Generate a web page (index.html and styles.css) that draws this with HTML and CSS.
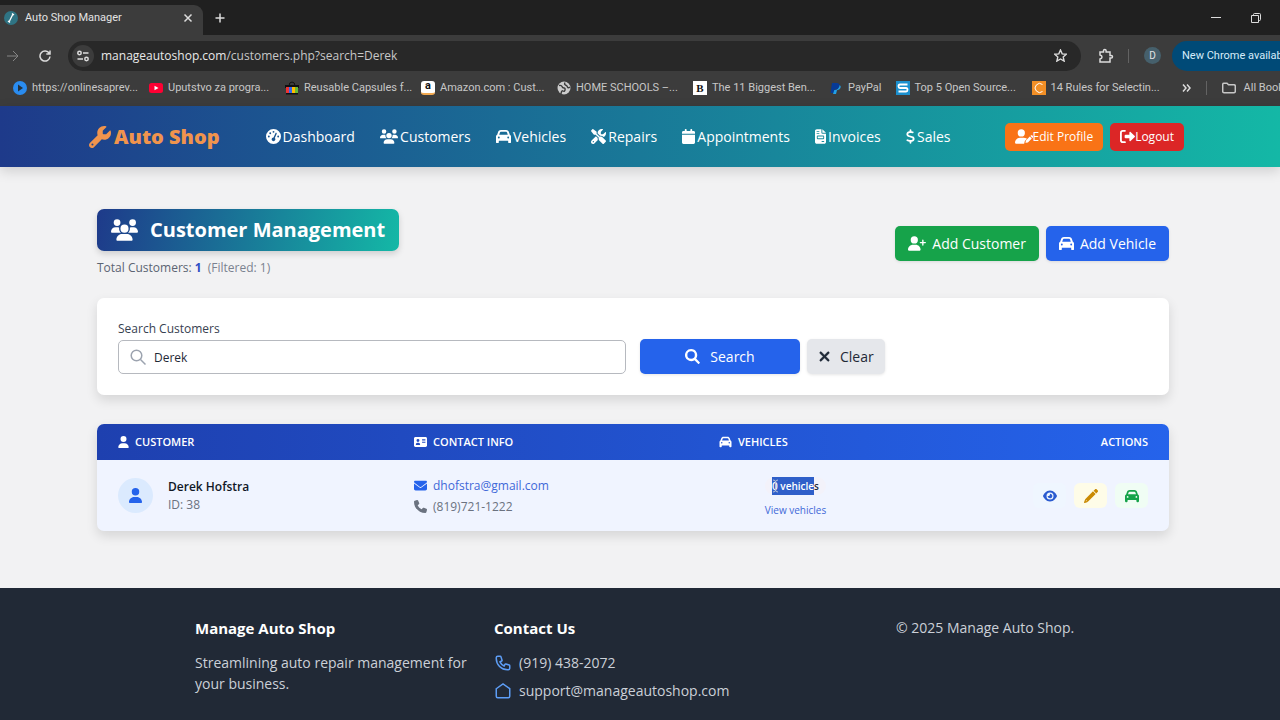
FILE: index.html
```html
<!DOCTYPE html>
<html lang="en">
<head>
    <meta charset="UTF-8">
    <meta name="viewport" content="width=device-width, initial-scale=1.0">
    <title>Auto Shop Manager</title>
    <link rel="stylesheet" href="styles.css">
</head>
<body>

<!-- Shared icons -->
<svg class="sprite" aria-hidden="true">
    <symbol id="i-user" viewBox="0 0 448 512"><path d="M224 256A128 128 0 1 0 224 0a128 128 0 1 0 0 256zm-45.7 48C79.8 304 0 383.8 0 482.3C0 498.7 13.3 512 29.7 512H418.3c16.4 0 29.7-13.3 29.7-29.7C448 383.8 368.2 304 269.7 304H178.3z"/></symbol>
    <symbol id="i-user-plus" viewBox="0 0 640 512"><path d="M96 128a128 128 0 1 1 256 0A128 128 0 1 1 96 128zM0 482.3C0 383.8 79.8 304 178.3 304h91.4C368.2 304 448 383.8 448 482.3c0 16.4-13.3 29.7-29.7 29.7H29.7C13.3 512 0 498.7 0 482.3zM504 312V248H440c-13.3 0-24-10.7-24-24s10.7-24 24-24h64V136c0-13.3 10.7-24 24-24s24 10.7 24 24v64h64c13.3 0 24 10.7 24 24s-10.7 24-24 24H552v64c0 13.3-10.7 24-24 24s-24-10.7-24-24z"/></symbol>
    <symbol id="i-user-pen" viewBox="0 0 640 512"><path d="M224 256A128 128 0 1 0 224 0a128 128 0 1 0 0 256zm-45.7 48C79.8 304 0 383.8 0 482.3C0 498.7 13.3 512 29.7 512H325l24-100 75-77C390 315 330 304 269.7 304H178.3zM549 236l71 71 13-13c16-16 16-41 0-57l-14-14c-16-16-41-16-57 0zM526 259L397 388c-4 4-7 9-8 15l-15 60c-1 5 0 11 4 15s10 6 15 4l60-15c6-1 11-4 15-8l129-129z"/></symbol>
    <symbol id="i-users" viewBox="0 0 640 512"><path d="M144 0a80 80 0 1 1 0 160A80 80 0 1 1 144 0zM512 0a80 80 0 1 1 0 160A80 80 0 1 1 512 0zM0 298.7C0 239.8 47.8 192 106.7 192h42.7c15.9 0 31 3.5 44.6 9.7c-1.3 7.2-1.9 14.7-1.9 22.3c0 38.2 16.8 72.5 43.3 96c-.2 0-.4 0-.7 0H21.3C9.6 320 0 310.4 0 298.7zM405.3 320c-.2 0-.4 0-.7 0c26.6-23.5 43.3-57.8 43.3-96c0-7.6-.7-15-1.9-22.3c13.6-6.3 28.7-9.7 44.6-9.7h42.7C592.2 192 640 239.8 640 298.7c0 11.8-9.6 21.3-21.3 21.3H405.3zM224 224a96 96 0 1 1 192 0 96 96 0 1 1 -192 0zM128 485.3C128 411.7 187.7 352 261.3 352H378.7C452.3 352 512 411.7 512 485.3c0 14.7-11.9 26.7-26.7 26.7H154.7c-14.7 0-26.7-11.9-26.7-26.7z"/></symbol>
    <symbol id="i-car" viewBox="0 0 512 512"><path d="M135.2 117.4L109.1 192H402.9l-26.1-74.6C372.3 104.6 360.2 96 346.6 96H165.4c-13.6 0-25.7 8.6-30.2 21.4zM39.6 196.8L74.8 96.3C88.3 57.8 124.6 32 165.4 32H346.6c40.8 0 77.1 25.8 90.6 64.3l35.2 100.5c23.2 9.6 39.6 32.5 39.6 59.2V400v48c0 17.7-14.3 32-32 32H448c-17.7 0-32-14.3-32-32V400H96v48c0 17.7-14.3 32-32 32H32c-17.7 0-32-14.3-32-32V400 256c0-26.7 16.4-49.6 39.6-59.2zM128 288a32 32 0 1 0 -64 0 32 32 0 1 0 64 0zm288 32a32 32 0 1 0 0-64 32 32 0 1 0 0 64z"/></symbol>
    <symbol id="i-wrench" viewBox="0 0 512 512"><path d="M352 320c88.4 0 160-71.6 160-160c0-15.3-2.2-30.1-6.2-44.2c-3.1-10.8-16.4-13.2-24.3-5.3l-76.8 76.8c-3 3-7.1 4.700-11.3 4.700H336c-8.8 0-16-7.200-16-16V118.600c0-4.200 1.700-8.300 4.700-11.300l76.800-76.800c7.900-7.900 5.400-21.200-5.300-24.300C382.100 2.200 367.300 0 352 0C263.600 0 192 71.600 192 160c0 19.100 3.400 37.500 9.500 54.500L19.900 396.100C7.200 408.800 0 426.100 0 444.100C0 481.600 30.400 512 67.900 512c18 0 35.300-7.200 48-19.900L297.500 310.500c17 6.200 35.400 9.500 54.500 9.500zM80 408a24 24 0 1 1 0 48 24 24 0 1 1 0-48z"/></symbol>
    <symbol id="i-gauge" viewBox="0 0 512 512"><path d="M0 256a256 256 0 1 1 512 0A256 256 0 1 1 0 256zM288 96a32 32 0 1 0 -64 0 32 32 0 1 0 64 0zM256 416c35.300 0 64-28.700 64-64c0-17.400-6.900-33.100-18.100-44.600L366 161.700c5.300-12.100-.2-26.300-12.300-31.600s-26.300 .2-31.600 12.300L257.900 288c-.6 0-1.300 0-1.900 0c-35.300 0-64 28.700-64 64s28.700 64 64 64zM176 144a32 32 0 1 0 -64 0 32 32 0 1 0 64 0zM96 288a32 32 0 1 0 0-64 32 32 0 1 0 0 64zm352-32a32 32 0 1 0 -64 0 32 32 0 1 0 64 0z"/></symbol>
    <symbol id="i-tools" viewBox="0 0 512 512"><path d="M78.600 5C69.100-2.400 55.600-1.500 47 7L7 47c-8.500 8.500-9.400 22-2.100 31.600l80 104c4.500 5.900 11.600 9.400 19 9.400h54.100l109 109c-14.700 29-10 65.400 14.300 89.600l112 112c12.500 12.500 32.800 12.500 45.300 0l64-64c12.500-12.500 12.500-32.800 0-45.300l-112-112c-24.200-24.200-60.600-29-89.600-14.300l-109-109V104c0-7.500-3.500-14.500-9.400-19L78.600 5zM19.900 396.100C7.200 408.800 0 426.100 0 444.100C0 481.600 30.400 512 67.900 512c18 0 35.300-7.200 48-19.900L233.700 374.300c-7.800-20.900-9-43.600-3.600-65.100l-61.700-61.700L19.900 396.100zM512 144c0-10.500-1.100-20.700-3.200-30.500c-2.400-11.200-16.100-14.100-24.200-6l-63.900 63.900c-3 3-7.100 4.700-11.300 4.700H352c-8.800 0-16-7.200-16-16V102.600c0-4.200 1.700-8.300 4.700-11.300l63.900-63.900c8.100-8.100 5.200-21.800-6-24.200C388.700 1.100 378.500 0 368 0C288.500 0 224 64.500 224 144l0 .8 85.300 85.300c36-9.100 75.800 .5 104 28.700L429 274.500c49-23 83-72.800 83-130.500zM56 432a24 24 0 1 1 48 0 24 24 0 1 1 -48 0z"/></symbol>
    <symbol id="i-calendar" viewBox="0 0 448 512"><path d="M96 32V64H48C21.500 64 0 85.500 0 112v48H448V112c0-26.500-21.500-48-48-48H352V32c0-17.700-14.300-32-32-32s-32 14.300-32 32V64H160V32c0-17.700-14.300-32-32-32S96 14.300 96 32zM448 192H0V464c0 26.500 21.500 48 48 48H400c26.500 0 48-21.500 48-48V192z"/></symbol>
    <symbol id="i-invoice" viewBox="0 0 384 512"><path fill-rule="evenodd" d="M64 0C28.700 0 0 28.700 0 64V448c0 35.300 28.700 64 64 64H320c35.300 0 64-28.700 64-64V160H256c-17.700 0-32-14.300-32-32V0zM256 0V128H384zM64 72h80a8 8 0 0 1 0 24H64a8 8 0 0 1 0-24zM64 136h80a8 8 0 0 1 0 24H64a8 8 0 0 1 0-24zM96 224H288a32 32 0 0 1 32 32v64a32 32 0 0 1-32 32H96a32 32 0 0 1-32-32V256a32 32 0 0 1 32-32zM96 256V320H288V256zM240 416h72a8 8 0 0 1 0 28H240a8 8 0 0 1 0-28z"/></symbol>
    <symbol id="i-dollar" viewBox="0 0 320 512"><path d="M160 0c17.700 0 32 14.300 32 32V67.700c1.600 .2 3.100 .4 4.700 .7c.4 .1 .7 .1 1.100 .2l48 8.800c17.400 3.200 28.900 19.900 25.700 37.200s-19.900 28.900-37.200 25.700l-47.500-8.700c-31.300-4.600-58.900-1.500-78.300 6.200s-27.200 18.300-29 28.100c-2 10.700-.5 16.700 1.200 20.400c1.800 3.900 5.500 8.300 12.800 13.200c16.300 10.700 41.300 17.700 73.700 26.300l2.900 .8c28.600 7.600 63.600 16.800 89.600 33.800c14.200 9.300 27.600 21.900 35.900 39.500c8.500 17.900 10.300 37.900 6.400 59.200c-6.900 38-33.100 63.400-65.600 76.700c-13.700 5.600-28.600 9.200-44.400 11V480c0 17.700-14.300 32-32 32s-32-14.300-32-32V445.100c-.4-.1-.9-.1-1.300-.2l-.2 0 0 0c-24.400-3.800-64.500-14.300-91.500-26.300c-16.100-7.200-23.400-26.100-16.200-42.200s26.100-23.400 42.200-16.200c20.900 9.300 55.300 18.500 75.200 21.600c31.900 4.700 58.200 2 76-5.300c16.900-6.900 24.600-16.900 26.800-28.900c1.900-10.600 .4-16.700-1.300-20.400c-1.900-4-5.600-8.400-13-13.300c-16.400-10.700-41.500-17.700-74-26.300l-2.800-.7 0 0C119.400 279.300 84.400 270 58.400 253c-14.200-9.300-27.500-22-35.800-39.600c-8.400-17.900-10.100-37.900-6.100-59.200C23.700 116 52.300 91.200 84.800 78.300c13.300-5.300 27.900-8.900 43.200-11V32c0-17.700 14.300-32 32-32z"/></symbol>
    <symbol id="i-logout" viewBox="0 0 512 512"><path d="M96 32h74a30 30 0 0 1 0 60H96a34 34 0 0 0-34 34V386a34 34 0 0 0 34 34h74a30 30 0 0 1 0 60H96a96 96 0 0 1-96-96V128a96 96 0 0 1 96-96zM504.500 273.400L361 409c-18 17-41 5-41-17V312H190a32 32 0 0 1-32-32V232a32 32 0 0 1 32-32H320V120c0-22 23-34 41-17L504.500 238.600c10 10 10 25 0 34.800z"/></symbol>
    <symbol id="i-search" viewBox="0 0 512 512"><path fill-rule="evenodd" d="M208 0a208 208 0 0 1 171 326l122 122a24 24 0 0 1 0 34l-20 20a24 24 0 0 1-34 0L325 380A208 208 0 1 1 208 0zM208 80a128 128 0 1 0 0 256 128 128 0 1 0 0-256z"/></symbol>
    <symbol id="i-xmark" viewBox="0 0 384 512"><path d="M342.600 150.600c12.500-12.500 12.500-32.800 0-45.300s-32.800-12.500-45.300 0L192 210.700 86.600 105.400c-12.500-12.500-32.800-12.500-45.300 0s-12.500 32.800 0 45.300L146.700 256 41.400 361.400c-12.500 12.500-12.500 32.800 0 45.300s32.800 12.500 45.300 0L192 301.300 297.400 406.600c12.500 12.500 32.800 12.500 45.300 0s12.500-32.800 0-45.300L237.300 256 342.600 150.600z" stroke="currentColor" stroke-width="20"/></symbol>
    <symbol id="i-card" viewBox="0 0 576 512"><path fill-rule="evenodd" d="M64 32C28.700 32 0 60.700 0 96V416c0 35.300 28.700 64 64 64H512c35.300 0 64-28.700 64-64V96c0-35.300-28.700-64-64-64zM176 128a64 64 0 1 1 0 128 64 64 0 1 1 0-128zM80 368c0-44.200 35.800-80 80-80h32c44.200 0 80 35.800 80 80 0 8.800-7.200 16-16 16H96c-8.800 0-16-7.200-16-16zM368 128H496a16 16 0 0 1 0 32H368a16 16 0 0 1 0-32zM368 192H496a16 16 0 0 1 0 32H368a16 16 0 0 1 0-32zM368 256H496a16 16 0 0 1 0 32H368a16 16 0 0 1 0-32z"/></symbol>
    <symbol id="i-envelope" viewBox="0 0 512 512"><path d="M48 64C21.500 64 0 85.500 0 112c0 15.100 7.100 29.300 19.200 38.400L236.800 313.600c11.400 8.500 27 8.500 38.400 0L492.800 150.400c12.100-9.100 19.200-23.300 19.200-38.400c0-26.500-21.500-48-48-48H48zM0 176V384c0 35.300 28.700 64 64 64H448c35.300 0 64-28.700 64-64V176L294.400 339.200c-22.800 17.100-54 17.100-76.800 0L0 176z"/></symbol>
    <symbol id="i-phone" viewBox="0 0 512 512"><path d="M164.900 24.600c-7.700-18.600-28-28.500-47.400-23.200l-88 24C12.100 30.200 0 46 0 64C0 311.400 200.600 512 448 512c18 0 33.800-12.100 38.600-29.500l24-88c5.300-19.400-4.600-39.700-23.200-47.400l-96-40c-16.300-6.800-35.200-2.100-46.300 11.600L304.700 368C234.300 334.700 177.300 277.700 144 207.300L193.300 167c13.700-11.200 18.400-30 11.600-46.300l-40-96z"/></symbol>
    <symbol id="i-eye" viewBox="0 0 576 512"><path d="M288 32c-80.800 0-145.500 36.800-192.600 80.600C48.600 156 17.300 208 2.500 243.700c-3.300 7.900-3.300 16.700 0 24.600C17.300 304 48.600 356 95.400 399.400C142.500 443.200 207.200 480 288 480s145.500-36.800 192.600-80.600c46.800-43.500 78.100-95.400 93-131.100c3.300-7.900 3.300-16.700 0-24.600c-14.900-35.700-46.200-87.700-93-131.100C433.500 68.800 368.800 32 288 32zM144 256a144 144 0 1 1 288 0 144 144 0 1 1 -288 0zm144-64c0 35.300-28.700 64-64 64c-7.100 0-13.900-1.200-20.300-3.300c-5.500-1.800-11.900 1.600-11.700 7.400c.3 6.900 1.300 13.800 3.200 20.700c13.700 51.200 66.400 81.600 117.600 67.900s81.600-66.400 67.900-117.600c-11.100-41.500-47.800-69.400-88.600-71.100c-5.800-.2-9.200 6.100-7.400 11.700c2.100 6.400 3.300 13.200 3.300 20.300z"/></symbol>
    <symbol id="i-pencil" viewBox="0 0 512 512"><path fill-rule="evenodd" d="M400 14L350 64 448 162 498 112C517 93 517 63 498 44L468 14C449-5 419-5 400 14zM328 86L52 362C42 372 35 384 31 398L1 482C-5 502 10 517 30 511L114 481C128 477 140 470 150 460L426 184zM74 405l33 33-42 13z"/></symbol>
</svg>

<!-- Browser window -->
<header class="chrome">
    <div class="tabstrip">
        <div class="tab">
            <svg class="tab-icon" viewBox="0 0 14 14"><circle cx="7" cy="7" r="7" fill="#2f7484"/><path d="M5 11l4-8M4 10l2 1.500M8 2.500l2 1.500" stroke="#fff" stroke-width="1.300"/></svg>
            <span class="tab-title">Auto Shop Manager</span>
            <button class="plain" aria-label="Close tab"><svg class="line" width="10" height="10" viewBox="0 0 10 10"><path d="M1.500 1.500l7 7M8.500 1.500l-7 7"/></svg></button>
        </div>
        <button class="plain new-tab" aria-label="New tab"><svg class="line" width="10" height="10" viewBox="0 0 10 10"><path d="M5 .5v9M.5 5h9"/></svg></button>
        <div class="window-buttons">
            <button class="plain" aria-label="Minimize"><svg class="line thin" width="10" height="10" viewBox="0 0 10 10"><path d="M0 4.500h10"/></svg></button>
            <button class="plain" aria-label="Restore"><svg class="line thin" width="10" height="10" viewBox="0 0 10 10"><path d="M.5 2.500h7v7h-7zM2.500 2.500v-1q0-1 1-1h5q1 0 1 1v5q0 1-1 1h-1"/></svg></button>
        </div>
    </div>

    <div class="toolbar">
        <button class="plain dim" aria-label="Forward"><svg class="line thin" width="12" height="12" viewBox="0 0 12 12"><path d="M0 6h11M6 1l5 5-5 5"/></svg></button>
        <button class="plain reload" aria-label="Reload"><svg class="line" width="12" height="12" viewBox="0 0 12 12"><path d="M10.300 3.500A5 5 0 1 0 11 6.500M11 .5v3.500H7.300"/></svg></button>
        <div class="omnibox">
            <span class="site-info"><svg class="line" width="12" height="12" viewBox="0 0 12 12"><circle cx="2.500" cy="3" r="1.700"/><path d="M6 3h5.500M.5 9H6"/><circle cx="9.500" cy="9" r="1.700"/></svg></span>
            <span class="url"><b>manageautoshop.com</b>/customers.php?search=Derek</span>
            <button class="plain" aria-label="Bookmark this page"><svg class="line" width="13" height="13" viewBox="0 0 14 14"><path d="M7 1l1.800 4.200 4.500.4-3.400 3 1 4.400L7 10.700 3.100 13l1-4.400-3.400-3 4.500-.4z"/></svg></button>
        </div>
        <div class="toolbar-end">
            <button class="plain" aria-label="Extensions"><svg class="line" width="16" height="16" viewBox="0 0 16 16"><path d="M2 4h3.500V2.700a1.300 1.300 0 0 1 2.600 0V4H12v3.500h1.200a1.300 1.300 0 0 1 0 2.600H12V14H2v-3q2-.5 2-2T2 7z"/></svg></button>
            <span class="divider"></span>
            <span class="profile">D</span>
            <button class="update">New Chrome available</button>
        </div>
    </div>

    <nav class="bookmarks" aria-label="Bookmarks">
        <a href="#" class="bookmark"><svg viewBox="0 0 14 14"><circle cx="7" cy="7" r="7" fill="#2a8cf0"/><path d="M5 3.500l5 3.500-5 3.500z" fill="#26323c"/></svg>https://onlinesaprev...</a>
        <a href="#" class="bookmark"><svg viewBox="0 0 14 14"><rect y="2" width="14" height="10" rx="2.500" fill="#f03"/><path d="M5.500 4.700l4 2.300-4 2.300z" fill="#fff"/></svg>Uputstvo za progra...</a>
        <a href="#" class="bookmark"><svg viewBox="0 0 14 14"><path d="M4 5q0-4 3-4t3 4" fill="none" stroke="#111"/><path d="M0 4h14v3H0zM1 12h12v1.500H1z" fill="#111"/><path d="M1 6h3v6H1z" fill="#e33"/><path d="M4 6h3v6H4z" fill="#36e"/><path d="M7 6h3v6H7z" fill="#fb0"/><path d="M10 6h3v6h-3z" fill="#6b3"/></svg>Reusable Capsules f...</a>
        <a href="#" class="bookmark"><span class="favicon amazon">a</span>Amazon.com : Cust...</a>
        <a href="#" class="bookmark"><svg viewBox="0 0 14 14"><circle cx="7" cy="7" r="6.500" fill="#ccc"/><path d="M2 4.500q2.500-.5 3 1t2 1.500 1 2-2 1-2 3M8 1.500q-1 2 .5 2.500t2 2 2.500 0" fill="none" stroke="#3c3c3c" stroke-width="1.400"/></svg>HOME SCHOOLS –...</a>
        <a href="#" class="bookmark"><span class="favicon biggest">B</span>The 11 Biggest Ben...</a>
        <a href="#" class="bookmark short"><svg viewBox="0 0 14 14"><path d="M3 2h5q3.500.5 2.500 3.500T6 8.500L5 12H1.500z" fill="#063a96"/><path d="M10.700 4q1.600 1 .8 3T8 9.300L7 13H4l1.300-4Q10 9 10.700 4z" fill="#22a0e6"/></svg>PayPal</a>
        <a href="#" class="bookmark"><svg viewBox="0 0 14 14"><path d="M0 0h14v14H0z" fill="#1b90cf"/><path d="M11.500 3.500H4q-1.500 0-1.500 1.700T4 7h6q1.500 0 1.500 1.700T10 10.500H2.500" fill="none" stroke="#fff" stroke-width="1.800"/></svg>Top 5 Open Source...</a>
        <a href="#" class="bookmark"><svg viewBox="0 0 14 14"><path d="M0 0h14v14H0z" fill="#f28f26"/><path d="M10.500 3.500A4.500 4.500 0 1 0 10.500 10.500" fill="none" stroke="#fff"/></svg>14 Rules for Selectin...</a>
        <div class="bookmarks-end">
            <button class="plain" aria-label="More bookmarks"><svg class="line" width="9" height="10" viewBox="0 0 9 10"><path d="M1 1.500L4 5 1 8.500M5 1.500L8 5 5 8.500"/></svg></button>
            <span class="divider"></span>
            <a href="#" class="bookmark all"><svg class="line" viewBox="0 0 14 14"><path d="M.7 3.500q0-1.300 1.200-1.300H5l1.500 1.600H12q1.300 0 1.300 1.200v5.500q0 1.200-1.300 1.200H2q-1.300 0-1.300-1.200z"/></svg>All Bookmarks</a>
        </div>
    </nav>
</header>

<nav class="navbar">
    <a href="#" class="brand"><svg class="icon"><use href="#i-wrench"/></svg>Auto Shop</a>
    <div class="nav-links">
        <a href="#"><svg class="icon"><use href="#i-gauge"/></svg>Dashboard</a>
        <a href="#"><svg class="icon wide"><use href="#i-users"/></svg>Customers</a>
        <a href="#"><svg class="icon"><use href="#i-car"/></svg>Vehicles</a>
        <a href="#"><svg class="icon"><use href="#i-tools"/></svg>Repairs</a>
        <a href="#"><svg class="icon slim"><use href="#i-calendar"/></svg>Appointments</a>
        <a href="#"><svg class="icon narrow"><use href="#i-invoice"/></svg>Invoices</a>
        <a href="#"><svg class="icon thin-icon"><use href="#i-dollar"/></svg>Sales</a>
    </div>
    <div class="nav-account">
        <a href="#" class="pill orange"><svg class="icon wide"><use href="#i-user-pen"/></svg>Edit Profile</a>
        <a href="#" class="pill red"><svg class="icon"><use href="#i-logout"/></svg>Logout</a>
    </div>
</nav>

<main class="content">
    <div class="page-head">
        <div>
            <h1 class="page-title"><svg class="icon"><use href="#i-users"/></svg>Customer Management</h1>
            <p class="totals">Total Customers: <strong>1</strong> <span>(Filtered: 1)</span></p>
        </div>
        <div class="head-actions">
            <a href="#" class="btn green"><svg class="icon wide"><use href="#i-user-plus"/></svg>Add Customer</a>
            <a href="#" class="btn blue"><svg class="icon"><use href="#i-car"/></svg>Add Vehicle</a>
        </div>
    </div>

    <form class="search-card">
        <div class="field">
            <label for="search">Search Customers</label>
            <div class="input-wrap">
                <svg class="input-icon" viewBox="0 0 16 16"><circle cx="6.500" cy="6.500" r="5.300"/><path d="M10.500 10.500l5 5"/></svg>
                <input type="text" id="search" name="search" value="Derek">
            </div>
        </div>
        <button type="submit" class="btn blue search-btn"><svg class="icon"><use href="#i-search"/></svg>Search</button>
        <button type="button" class="btn grey"><svg class="icon slim"><use href="#i-xmark"/></svg>Clear</button>
    </form>

    <div class="table-card">
        <table>
            <thead>
                <tr>
                    <th class="col-customer"><svg class="icon slim"><use href="#i-user"/></svg>Customer</th>
                    <th class="col-contact"><svg class="icon"><use href="#i-card"/></svg>Contact Info</th>
                    <th class="col-vehicles"><svg class="icon"><use href="#i-car"/></svg>Vehicles</th>
                    <th class="col-actions">Actions</th>
                </tr>
            </thead>
            <tbody>
                <tr>
                    <td>
                        <div class="customer">
                            <span class="avatar"><svg class="icon"><use href="#i-user"/></svg></span>
                            <div>
                                <div class="name">Derek Hofstra</div>
                                <div class="muted">ID: 38</div>
                            </div>
                        </div>
                    </td>
                    <td>
                        <a href="#" class="contact email"><svg class="icon"><use href="#i-envelope"/></svg>dhofstra@gmail.com</a>
                        <a href="#" class="contact muted"><svg class="icon"><use href="#i-phone"/></svg>(819)721-1222</a>
                    </td>
                    <td class="vehicles">
                        <span class="badge"><span class="selected">0 vehicle</span>s<svg class="cursor" viewBox="0 0 7 14"><path d="M1 1q2.500 0 2.500 2v8q0 2-2.500 2M6 1Q3.500 1 3.500 3M3.500 11q0 2 2.500 2"/></svg></span>
                        <a href="#" class="view-link">View vehicles</a>
                    </td>
                    <td>
                        <div class="row-actions">
                            <button class="action view" aria-label="View"><svg class="icon"><use href="#i-eye"/></svg></button>
                            <button class="action edit" aria-label="Edit"><svg class="icon"><use href="#i-pencil"/></svg></button>
                            <button class="action add" aria-label="Add vehicle"><svg class="icon"><use href="#i-car"/></svg></button>
                        </div>
                    </td>
                </tr>
            </tbody>
        </table>
    </div>
</main>

<footer class="footer">
    <div class="footer-about">
        <h2>Manage Auto Shop</h2>
        <p>Streamlining auto repair management for your business.</p>
    </div>
    <div class="footer-contact">
        <h2>Contact Us</h2>
        <a href="#"><svg viewBox="0 0 24 24"><path d="M3 5a2 2 0 012-2h3.280a1 1 0 01.948.684l1.498 4.493a1 1 0 01-.502 1.210l-2.257 1.130a11.042 11.042 0 005.516 5.516l1.130-2.257a1 1 0 011.210-.502l4.493 1.498a1 1 0 01.684.949V19a2 2 0 01-2 2h-1C9.716 21 3 14.284 3 6V5z"/></svg>(919) 438-2072</a>
        <a href="#"><svg viewBox="0 0 24 24"><path d="M3 9l9-6.500L21 9v10a2 2 0 01-2 2H5a2 2 0 01-2-2z"/></svg>support@manageautoshop.com</a>
    </div>
    <p class="copyright">© 2025 Manage Auto Shop.</p>
</footer>

</body>
</html>
```

FILE: styles.css
```css
* {
    box-sizing: border-box;
}
html {
    background-color: #1f2937;
}
body {
    font-family: "Open Sans", "Noto Sans", sans-serif;
    font-size: 14px;
    line-height: 20px;
    margin: 0;
    color: #1f2937;
    background-color: #f2f2f3;
    overflow: hidden;
}
a {
    color: inherit;
    text-decoration: none;
}
h1, h2, p {
    margin: 0;
}
button, input {
    font: inherit;
}
.sprite {
    position: absolute;
    width: 0;
    height: 0;
}
.icon {
    width: 15px;
    height: 15px;
    fill: currentColor;
    flex: none;
}
.icon.wide {
    width: 18px;
}
.icon.slim {
    width: 13px;
}
.icon.narrow {
    width: 11px;
}
.icon.thin-icon {
    width: 9px;
}

/* Browser window */
.chrome {
    background-color: #3c3c3c;
    color: #c7c7c7;
    font-family: Roboto, "Open Sans", sans-serif;
    font-size: 11px;
    overflow: hidden;
}
.plain {
    display: flex;
    padding: 0;
    border: none;
    background: none;
    color: #dcdcdc;
    cursor: pointer;
}
.plain.dim {
    color: #858585;
}
.line {
    fill: none;
    stroke: currentColor;
    stroke-width: 1.5;
}
.line.thin {
    stroke-width: 1;
}
.tabstrip {
    display: flex;
    align-items: center;
    height: 35px;
    background-color: #202020;
}
.tab {
    display: flex;
    align-items: center;
    align-self: flex-end;
    width: 203px;
    height: 30px;
    padding: 0 10px 4px 4px;
    border-radius: 0 9px 0 0;
    background-color: #3c3c3c;
    color: #e3e3e3;
}
.tab-icon {
    width: 14px;
    height: 14px;
    margin-right: 7px;
}
.tab-title {
    flex: 1;
}
.new-tab {
    margin-left: 12px;
}
.window-buttons {
    display: flex;
    gap: 30px;
    margin-left: auto;
    margin-right: 19px;
}
.toolbar {
    display: flex;
    align-items: center;
    height: 41px;
    padding-left: 7px;
}
.reload {
    margin: 0 17px 0 20px;
}
.omnibox {
    display: flex;
    align-items: center;
    flex: 1;
    height: 30px;
    padding: 0 14px 0 4px;
    border-radius: 15px;
    background-color: #282828;
}
.site-info {
    display: flex;
    align-items: center;
    justify-content: center;
    width: 22px;
    height: 22px;
    margin-right: 7px;
    border-radius: 50%;
    background-color: #3c3c3c;
    color: #dcdcdc;
}
.url {
    flex: 1;
    font-family: "Open Sans", sans-serif;
    font-size: 12px;
    color: #c7c7c7;
}
.url b {
    font-weight: 400;
    color: #e8e8e8;
}
.toolbar-end {
    display: flex;
    align-items: center;
    width: 199px;
    padding-left: 17px;
}
.divider {
    flex: none;
    width: 1px;
    height: 14px;
    background-color: #636363;
}
.toolbar-end .divider {
    margin: 0 15px 0 14px;
}
.profile {
    flex: none;
    width: 17px;
    margin-right: 11px;
    border-radius: 50%;
    background-color: #46606c;
    color: #e3e3e3;
    font-size: 10px;
    line-height: 17px;
    text-align: center;
}
.update {
    flex: none;
    height: 30px;
    padding: 0 10px;
    border: none;
    border-radius: 15px;
    background-color: #004a77;
    color: #d6ecfa;
}
.bookmarks {
    display: flex;
    align-items: center;
    gap: 14px;
    height: 30px;
    padding: 0 0 6px 13px;
    white-space: nowrap;
}
.bookmark {
    display: flex;
    align-items: center;
    flex: none;
    gap: 5px;
    width: 122px;
}
.bookmark svg, .favicon {
    flex: none;
    width: 14px;
    height: 14px;
}
.bookmark.short, .bookmark.all {
    width: auto;
}
.favicon {
    background-color: #fff;
    color: #111;
    font-weight: 700;
    line-height: 14px;
    text-align: center;
}
.favicon.amazon {
    border-radius: 3px;
    border-bottom: 2px solid #f2a950;
    line-height: 10px;
}
.favicon.biggest {
    font-family: "Liberation Serif", serif;
}
.bookmarks-end {
    display: flex;
    align-items: center;
    flex: none;
    gap: 15px;
    margin-left: 14px;
}
.bookmark.all {
    gap: 8px;
}

/* Navigation */
.navbar {
    display: flex;
    align-items: center;
    height: 61px;
    padding: 0 96px 0 89px;
    background: linear-gradient(90deg, #1e3a8a, #14b8a6);
    box-shadow: 0 4px 12px rgba(0, 0, 0, 0.15);
    color: #fff;
    white-space: nowrap;
}
.brand {
    display: flex;
    align-items: center;
    gap: 3px;
    color: #f0944d;
    font-size: 20px;
    font-weight: 800;
}
.brand .icon {
    width: 22px;
    height: 22px;
}
.nav-links {
    display: flex;
    flex: 1;
    justify-content: space-between;
    margin: 0 54px 0 46px;
    font-weight: 500;
}
.nav-links a {
    display: flex;
    align-items: center;
    gap: 2px;
}
.nav-account {
    display: flex;
    gap: 7px;
}
.pill {
    display: flex;
    align-items: center;
    height: 28px;
    padding: 0 10px;
    border-radius: 5px;
    font-size: 12px;
}
.orange {
    background-color: #f97316;
}
.red {
    background-color: #dc2626;
}
.green {
    background-color: #16a34a;
}
.blue {
    background-color: #2563eb;
}

/* Content */
.content {
    padding: 42px 111px 57px 97px;
}
.page-head {
    display: flex;
    align-items: center;
    justify-content: space-between;
    margin-bottom: 20px;
}
.page-title {
    display: flex;
    align-items: center;
    gap: 12px;
    height: 42px;
    padding: 0 14px;
    border-radius: 7px;
    background: linear-gradient(100deg, #1e3a8a, #14b8a6);
    box-shadow: 0 3px 6px rgba(0, 0, 0, 0.15);
    color: #fff;
    font-size: 20px;
    font-weight: 700;
}
.page-title .icon {
    width: 27px;
    height: 22px;
}
.totals {
    margin-top: 7px;
    color: #5b6472;
    font-size: 12px;
}
.totals strong {
    color: #2f4fc4;
}
.totals span {
    margin-left: 3px;
    color: #7b8290;
}
.head-actions {
    display: flex;
    gap: 7px;
}
.btn {
    display: flex;
    align-items: center;
    justify-content: center;
    gap: 6px;
    height: 35px;
    padding: 0 13px;
    border: none;
    border-radius: 5px;
    box-shadow: 0 1px 3px rgba(0, 0, 0, 0.1);
    color: #fff;
    cursor: pointer;
}
.grey {
    gap: 9px;
    margin-left: -7px;
    padding: 0 11px;
    background-color: #e5e7eb;
    color: #1f2937;
}
.search-card {
    display: flex;
    align-items: flex-end;
    gap: 14px;
    margin-bottom: 29px;
    padding: 21px;
    border-radius: 7px;
    background-color: #fff;
    box-shadow: 0 5px 12px rgba(0, 0, 0, 0.12);
}
.field {
    width: 508px;
}
.field label {
    display: block;
    margin-bottom: 1px;
    color: #374151;
    font-size: 12px;
    font-weight: 500;
}
.input-wrap {
    position: relative;
}
.input-wrap input {
    display: block;
    width: 100%;
    height: 34px;
    padding: 0 35px;
    border: 1px solid #b6b9bf;
    border-radius: 5px;
    background-color: #fff;
    color: #1f2937;
    font-size: 12px;
}
.input-icon {
    position: absolute;
    top: 9px;
    left: 12px;
    width: 16px;
    height: 16px;
    fill: none;
    stroke: #9ca3af;
    stroke-width: 1.5;
}
.search-btn {
    gap: 10px;
    width: 160px;
}

/* Table */
.table-card {
    overflow: hidden;
    border-radius: 7px;
    background-color: #f0f4ff;
    box-shadow: 0 5px 12px rgba(0, 0, 0, 0.12);
}
table {
    width: 100%;
    border-collapse: collapse;
    table-layout: fixed;
}
thead {
    background: linear-gradient(90deg, #1e40af, #2563eb);
    color: #fff;
}
th, td {
    padding: 0 21px;
    text-align: left;
}
th {
    height: 36px;
    font-size: 11px;
    font-weight: 600;
    text-transform: uppercase;
    vertical-align: middle;
}
th .icon {
    width: 13px;
    height: 12px;
    margin-right: 6px;
    vertical-align: -2px;
}
th .icon.slim {
    width: 11px;
}
.col-customer {
    width: 296px;
}
.col-contact {
    width: 305px;
}
.col-vehicles {
    width: 195px;
}
.col-actions {
    text-align: right;
}
td {
    height: 71px;
    font-size: 12px;
}
.customer {
    display: flex;
    align-items: center;
    gap: 15px;
}
.avatar {
    display: flex;
    align-items: center;
    justify-content: center;
    width: 35px;
    height: 35px;
    border-radius: 50%;
    background-color: #dbeafe;
    color: #2563eb;
}
.customer .name {
    color: #111827;
    font-weight: 600;
    line-height: 18px;
}
.customer .muted {
    line-height: 18px;
}
.muted {
    color: #6b7280;
}
.contact {
    display: flex;
    align-items: center;
    gap: 6px;
    line-height: 21px;
}
.contact .icon {
    width: 13px;
    height: 13px;
}
.email {
    color: #3f68d8;
}
.email .icon {
    color: #2563eb;
}
.vehicles {
    padding-top: 5px;
    text-align: center;
}
.badge {
    position: relative;
    display: inline-block;
    padding: 0 7px;
    border-radius: 9px;
    background-color: #f3f2fa;
    font-size: 10px;
    font-weight: 600;
    line-height: 18px;
}
.selected {
    display: inline-block;
    background-color: #2f5fc9;
    color: #fff;
}
.cursor {
    position: absolute;
    top: 2px;
    left: 7px;
    width: 7px;
    height: 14px;
    fill: none;
    stroke: #b9c3d8;
}
.view-link {
    display: block;
    margin-top: 4px;
    color: #3f68d8;
    font-size: 10px;
}
.row-actions {
    display: flex;
    justify-content: flex-end;
    gap: 8px;
}
.action {
    display: flex;
    align-items: center;
    justify-content: center;
    width: 33px;
    height: 25px;
    padding: 0;
    border: none;
    border-radius: 6px;
    cursor: pointer;
}
.action .icon {
    width: 14px;
    height: 14px;
}
.view {
    background-color: #eff6ff;
    color: #2b5bd0;
}
.edit {
    background-color: #fefce8;
    color: #ca8a04;
}
.add {
    background-color: #f0fdf4;
    color: #16a34a;
}

/* Footer */
.footer {
    display: flex;
    align-items: flex-start;
    padding: 28px 195px;
    background-color: #212936;
    color: #cbd0d8;
    line-height: 21px;
}
.footer h2 {
    margin-bottom: 11px;
    color: #fff;
    font-size: 15px;
    font-weight: 700;
    line-height: 25px;
}
.footer-about {
    width: 284px;
    margin-right: 15px;
}
.footer-contact {
    flex: 1;
}
.footer-contact a {
    display: flex;
    align-items: center;
    gap: 7px;
    margin-bottom: 7px;
}
.footer-contact svg {
    width: 18px;
    height: 18px;
    fill: none;
    stroke: #5d9df5;
    stroke-width: 2;
}
.copyright {
    width: 189px;
    margin-top: 1px;
}
```
